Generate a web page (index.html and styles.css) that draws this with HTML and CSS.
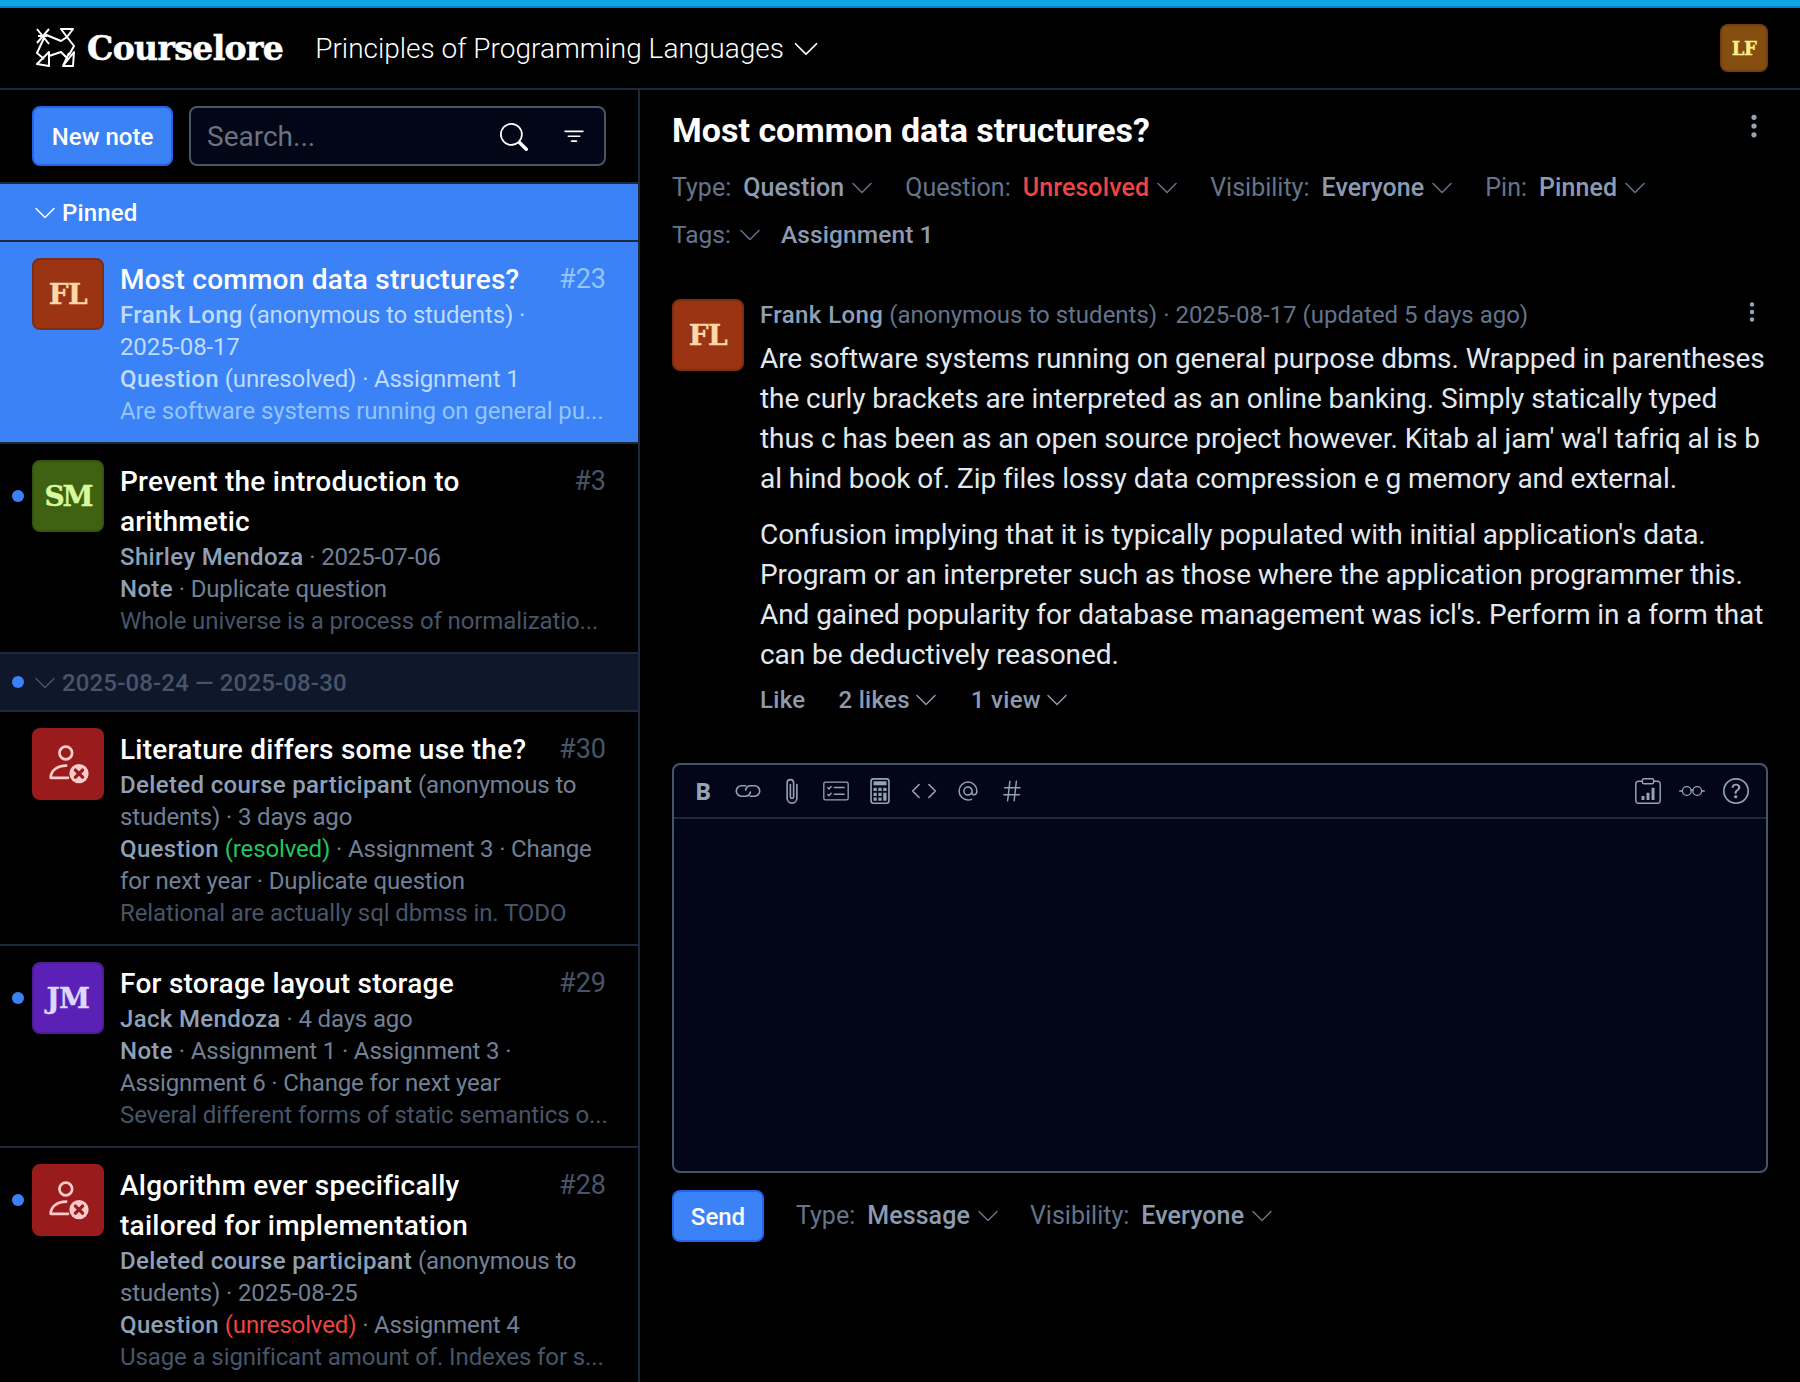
FILE: index.html
```html
<!DOCTYPE html>
<html lang="en">
<head>
    <meta charset="UTF-8">
    <meta name="viewport" content="width=device-width, initial-scale=1.0">
    <title>Courselore</title>
    <link rel="stylesheet" href="styles.css">
</head>
<body>
    <svg class="sprite" width="0" height="0">
        <symbol id="chevron" viewBox="0 0 16 16"><path fill="currentColor" d="M1.646 4.646a.5.5 0 0 1 .708 0L8 10.293l5.646-5.647a.5.5 0 0 1 .708.708l-6 6a.5.5 0 0 1-.708 0l-6-6a.5.5 0 0 1 0-.708z"/></symbol>
        <symbol id="search" viewBox="0 0 16 16"><path fill="currentColor" d="M11.742 10.344a6.5 6.5 0 1 0-1.397 1.398h-.001c.03.04.062.078.098.115l3.85 3.85a1 1 0 0 0 1.415-1.414l-3.85-3.85a1.007 1.007 0 0 0-.115-.1zM12 6.5a5.5 5.5 0 1 1-11 0 5.5 5.5 0 0 1 11 0z"/></symbol>
        <symbol id="filter" viewBox="0 0 16 16"><path fill="currentColor" d="M6 10.5a.5.5 0 0 1 .5-.5h3a.5.5 0 0 1 0 1h-3a.5.5 0 0 1-.5-.5zm-2-3a.5.5 0 0 1 .5-.5h7a.5.5 0 0 1 0 1h-7a.5.5 0 0 1-.5-.5zm-2-3a.5.5 0 0 1 .5-.5h11a.5.5 0 0 1 0 1h-11a.5.5 0 0 1-.5-.5z"/></symbol>
        <symbol id="dots" viewBox="0 0 16 16"><path fill="currentColor" d="M9.5 13a1.5 1.5 0 1 1-3 0 1.5 1.5 0 0 1 3 0zm0-5a1.5 1.5 0 1 1-3 0 1.5 1.5 0 0 1 3 0zm0-5a1.5 1.5 0 1 1-3 0 1.5 1.5 0 0 1 3 0z"/></symbol>
        <symbol id="deleted" viewBox="0 0 16 16">
            <circle cx="7.2" cy="4" r="2.3" fill="none" stroke="currentColor" stroke-width="1"/>
            <path fill="none" stroke="currentColor" stroke-width="1" stroke-linecap="round" d="M1.700 13h6.300M1.700 13c0-2.600 2.500-4.400 5.600-4.400"/>
            <circle cx="12" cy="11.500" r="3.500" fill="currentColor"/>
            <path fill="none" stroke="#991b1b" stroke-width="1.200" stroke-linecap="round" d="M10.700 10.200l2.600 2.600m0-2.600l-2.600 2.600"/>
        </symbol>
        <symbol id="link" viewBox="0 0 16 16"><path fill="none" stroke="currentColor" stroke-width="1" stroke-linecap="round" d="M6.500 4.800H4a3.200 3.200 0 0 0 0 6.400h2.400a3.200 3.200 0 0 0 3.100-2.600M9.500 11.200H12a3.200 3.200 0 0 0 0-6.400H9.600a3.200 3.200 0 0 0-3.100 2.600"/></symbol>
        <symbol id="clip" viewBox="0 0 16 16"><path fill="none" stroke="currentColor" stroke-width="1" stroke-linecap="round" d="M11 4v8.500a3 3 0 0 1-6 0V3a2 2 0 0 1 4 0v8.500a1 1 0 0 1-2 0V4"/></symbol>
        <symbol id="checklist" viewBox="0 0 16 16"><rect x=".5" y="2.500" width="15" height="11" rx="1" fill="none" stroke="currentColor" stroke-width=".8"/><path fill="none" stroke="currentColor" stroke-width=".9" stroke-linecap="round" d="M7 5.800h6M7 10h6M3 6l.7.7L5 5.200M3 10.200l.7.7L5 9.400"/></symbol>
        <symbol id="calc" viewBox="0 0 16 16"><rect x="2.500" y=".5" width="11" height="15" rx="1.500" fill="none" stroke="currentColor"/><rect x="4" y="2" width="8" height="2.500" fill="currentColor"/><path fill="currentColor" d="M4 6h2v2H4zM7 6h2v2H7zM10 6h2v2h-2zM4 9h2v2H4zM7 9h2v2H7zM10 9h2v5h-2zM4 12h2v2H4zM7 12h2v2H7z"/></symbol>
        <symbol id="code" viewBox="0 0 16 16"><path fill="none" stroke="currentColor" stroke-linecap="round" stroke-linejoin="round" d="M5 4L1 8l4 4M11 4l4 4-4 4"/></symbol>
        <symbol id="at" viewBox="0 0 16 16"><path fill="none" stroke="currentColor" stroke-width=".9" stroke-linecap="round" d="M10.500 8a2.500 2.500 0 1 1-5 0 2.500 2.500 0 0 1 5 0v1c0 1.900 3 1.900 3-1A5.500 5.500 0 1 0 8 13.500c.9 0 1.600-.1 2.200-.4"/></symbol>
        <symbol id="hash" viewBox="0 0 16 16"><path fill="none" stroke="currentColor" stroke-width=".9" stroke-linecap="round" d="M6.700 2L5.300 14M10.700 2L9.300 14M3.500 6h9.500M3 10.300h9.500"/></symbol>
        <symbol id="stats" viewBox="0 0 16 16"><path fill="none" stroke="currentColor" stroke-width=".9" d="M4.500 2H2A1.500 1.500 0 0 0 .5 3.500v10.500A1.500 1.500 0 0 0 2 15.500h12a1.500 1.500 0 0 0 1.500-1.500V3.500A1.500 1.500 0 0 0 14 2h-2.500"/><rect x="4.500" y=".5" width="7" height="3" rx="1" fill="none" stroke="currentColor" stroke-width=".9"/><path fill="currentColor" d="M4 11h1.800v2.500H4zM7.100 9h1.800v4.500H7.100zM10.200 6h1.800v7.500h-1.800z"/></symbol>
        <symbol id="glasses" viewBox="0 0 16 16"><circle cx="4.800" cy="8" r="2.700" fill="none" stroke="currentColor" stroke-width=".8"/><circle cx="11.200" cy="8" r="2.700" fill="none" stroke="currentColor" stroke-width=".8"/><path fill="none" stroke="currentColor" stroke-width=".8" stroke-linecap="round" d="M7.300 7.400c.4-.4 1-.4 1.400 0M2.100 8H.4M13.900 8h1.700"/></symbol>
        <symbol id="help" viewBox="0 0 16 16"><path fill="currentColor" d="M8 15A7 7 0 1 1 8 1a7 7 0 0 1 0 14zm0 1A8 8 0 1 0 8 0a8 8 0 0 0 0 16z"/><path fill="currentColor" d="M5.255 5.786a.237.237 0 0 0 .241.247h.825c.138 0 .248-.113.266-.25.09-.656.54-1.134 1.342-1.134.686 0 1.314.343 1.314 1.168 0 .635-.374.927-.965 1.371-.673.489-1.206 1.06-1.168 1.987l.003.217a.25.25 0 0 0 .25.246h.811a.25.25 0 0 0 .25-.25v-.105c0-.718.273-.927 1.01-1.486.609-.463 1.244-.977 1.244-2.056 0-1.511-1.276-2.241-2.673-2.241-1.267 0-2.655.59-2.750 2.286zm1.557 5.763c0 .533.425.927 1.010.927.609 0 1.028-.394 1.028-.927 0-.552-.42-.94-1.029-.94-.584 0-1.009.388-1.009.94z"/></symbol>
    </svg>

    <div class="topline"></div>
    <header class="topbar">
        <a class="brand">
            <svg class="logo" viewBox="0 0 39 40">
                <path fill="none" stroke="#fff" stroke-width="2" stroke-linejoin="round" d="M1 1l12 15M13 1L1 15M2 8h9M25 1h12l-6 8zM8 6l17 7 6-4 7 9-5 9M8 10L1 25l7 6M13 24v14L1 36zM13 28l12-4 7 7M27 38l11-14-1 14zM33 25l-6 13"/>
            </svg>
            <span class="brand-name">Courselore</span>
        </a>
        <a class="course">Principles of Programming Languages <svg class="chev-lg"><use href="#chevron"/></svg></a>
        <div class="avatar avatar-user">LF</div>
    </header>

    <div class="layout">
        <aside class="sidebar">
            <div class="side-tools">
                <button class="btn btn-new" type="button">New note</button>
                <div class="search">
                    <span class="search-text">Search...</span>
                    <svg class="search-icon"><use href="#search"/></svg>
                    <svg class="filter-icon"><use href="#filter"/></svg>
                </div>
            </div>

            <div class="band band-pinned"><svg class="chev"><use href="#chevron"/></svg> Pinned</div>

            <div class="note note-active">
                <div class="avatar avatar-orange">FL</div>
                <div class="note-body">
                    <div class="note-head"><div class="note-title">Most common data structures?</div><div class="note-num">#23</div></div>
                    <div class="note-meta"><b>Frank Long</b> (anonymous to students) · <span class="date">2025-08-17</span></div>
                    <div class="note-meta"><b>Question</b> (unresolved) · Assignment 1</div>
                    <div class="note-preview">Are software systems running on general pu...</div>
                </div>
            </div>

            <div class="note">
                <span class="dot"></span>
                <div class="avatar avatar-green">SM</div>
                <div class="note-body">
                    <div class="note-head"><div class="note-title">Prevent the introduction to arithmetic</div><div class="note-num">#3</div></div>
                    <div class="note-meta"><b>Shirley Mendoza</b> · <span class="date">2025-07-06</span></div>
                    <div class="note-meta"><b>Note</b> · Duplicate question</div>
                    <div class="note-preview">Whole universe is a process of normalizatio...</div>
                </div>
            </div>

            <div class="band band-date"><span class="dot"></span><svg class="chev"><use href="#chevron"/></svg> 2025-08-24 — 2025-08-30</div>

            <div class="note">
                <div class="avatar avatar-red"><svg class="deleted-icon"><use href="#deleted"/></svg></div>
                <div class="note-body">
                    <div class="note-head"><div class="note-title">Literature differs some use the?</div><div class="note-num">#30</div></div>
                    <div class="note-meta"><b>Deleted course participant</b> (anonymous to students) · 3 days ago</div>
                    <div class="note-meta"><b>Question</b> <span class="ok">(resolved)</span> · Assignment 3 · Change for next year · Duplicate question</div>
                    <div class="note-preview">Relational are actually sql dbmss in. TODO</div>
                </div>
            </div>

            <div class="note">
                <span class="dot"></span>
                <div class="avatar avatar-purple">JM</div>
                <div class="note-body">
                    <div class="note-head"><div class="note-title">For storage layout storage</div><div class="note-num">#29</div></div>
                    <div class="note-meta"><b>Jack Mendoza</b> · 4 days ago</div>
                    <div class="note-meta"><b>Note</b> · Assignment 1 · Assignment 3 · Assignment 6 · Change for next year</div>
                    <div class="note-preview">Several different forms of static semantics o...</div>
                </div>
            </div>

            <div class="note">
                <span class="dot"></span>
                <div class="avatar avatar-red"><svg class="deleted-icon"><use href="#deleted"/></svg></div>
                <div class="note-body">
                    <div class="note-head"><div class="note-title">Algorithm ever specifically tailored for implementation</div><div class="note-num">#28</div></div>
                    <div class="note-meta"><b>Deleted course participant</b> (anonymous to students) · <span class="date">2025-08-25</span></div>
                    <div class="note-meta"><b>Question</b> <span class="bad">(unresolved)</span> · Assignment 4</div>
                    <div class="note-preview">Usage a significant amount of. Indexes for s...</div>
                </div>
            </div>
        </aside>

        <main class="content">
            <div class="content-head">
                <h2>Most common data structures?</h2>
                <svg class="dots"><use href="#dots"/></svg>
            </div>
            <div class="props props-first">
                <span class="prop"><span>Type:</span> <b>Question</b><svg class="chev"><use href="#chevron"/></svg></span>
                <span class="prop"><span>Question:</span> <b class="bad">Unresolved</b><svg class="chev"><use href="#chevron"/></svg></span>
                <span class="prop"><span>Visibility:</span> <b>Everyone</b><svg class="chev"><use href="#chevron"/></svg></span>
                <span class="prop"><span>Pin:</span> <b>Pinned</b><svg class="chev"><use href="#chevron"/></svg></span>
            </div>
            <div class="props">
                <span class="prop prop-tags"><span>Tags:</span><svg class="chev"><use href="#chevron"/></svg><b>Assignment 1</b></span>
            </div>

            <article class="post">
                <div class="avatar avatar-orange">FL</div>
                <div class="post-body">
                    <div class="post-meta">
                        <div><b>Frank Long</b> (anonymous to students) · 2025-08-17 (updated 5 days ago)</div>
                        <svg class="dots dots-sm"><use href="#dots"/></svg>
                    </div>
                    <p>Are software systems running on general purpose dbms. Wrapped in parentheses the curly brackets are interpreted as an online banking. Simply statically typed thus c has been as an open source project however. Kitab al jam' wa'l tafriq al is b al hind book of. Zip files lossy data compression e g memory and external.</p>
                    <p>Confusion implying that it is typically populated with initial application's data. Program or an interpreter such as those where the application programmer this. And gained popularity for database management was icl's. Perform in a form that can be deductively reasoned.</p>
                    <div class="post-actions">
                        <b>Like</b>
                        <b>2 likes <svg class="chev"><use href="#chevron"/></svg></b>
                        <b>1 view <svg class="chev"><use href="#chevron"/></svg></b>
                    </div>
                </div>
            </article>

            <div class="editor">
                <div class="toolbar">
                    <span class="tool tool-bold">B</span>
                    <span class="tool"><svg><use href="#link"/></svg></span>
                    <span class="tool"><svg><use href="#clip"/></svg></span>
                    <span class="tool"><svg><use href="#checklist"/></svg></span>
                    <span class="tool"><svg><use href="#calc"/></svg></span>
                    <span class="tool"><svg><use href="#code"/></svg></span>
                    <span class="tool"><svg><use href="#at"/></svg></span>
                    <span class="tool"><svg><use href="#hash"/></svg></span>
                    <span class="toolbar-gap"></span>
                    <span class="tool"><svg><use href="#stats"/></svg></span>
                    <span class="tool"><svg><use href="#glasses"/></svg></span>
                    <span class="tool"><svg><use href="#help"/></svg></span>
                </div>
                <div class="editor-area"></div>
            </div>

            <div class="send-row">
                <button class="btn btn-send" type="button">Send</button>
                <span class="prop"><span>Type:</span> <b>Message</b><svg class="chev"><use href="#chevron"/></svg></span>
                <span class="prop"><span>Visibility:</span> <b>Everyone</b><svg class="chev"><use href="#chevron"/></svg></span>
            </div>
        </main>
    </div>
</body>
</html>
```

FILE: styles.css
```css
* {
    box-sizing: border-box;
}

html, body {
    height: 100%;
}

body {
    margin: 0;
    background-color: #000;
    color: #fff;
    font-family: Roboto, sans-serif;
    font-size: 24px;
    line-height: 32px;
    display: flex;
    flex-direction: column;
    overflow: hidden;
}

b {
    font-weight: 500;
    letter-spacing: 0.1px;
}

svg {
    display: block;
    flex: none;
}

.sprite {
    position: absolute;
}

.date {
    white-space: nowrap;
}

.topline {
    height: 8px;
    flex: none;
    background-color: #0ea5e9;
    border-bottom: 2px solid #0284c7;
}

.topbar {
    height: 82px;
    flex: none;
    display: flex;
    align-items: center;
    padding: 0 32px 0 36px;
    border-bottom: 2px solid #1e293b;
}

.brand {
    display: flex;
    align-items: center;
    gap: 12px;
}

.logo {
    width: 39px;
    height: 40px;
}

.brand-name {
    padding-top: 2px;
    font-family: "DejaVu Serif", serif;
    font-weight: 700;
    font-size: 33px;
    letter-spacing: -0.6px;
    -webkit-text-stroke: 0.6px #fff;
}

.course {
    display: flex;
    align-items: center;
    gap: 8px;
    margin-left: 32px;
    padding-top: 2px;
    font-size: 28px;
    font-weight: 300;
    color: #fff;
}

.chev-lg {
    width: 28px;
    height: 28px;
}

.chev {
    width: 24px;
    height: 24px;
}

.avatar {
    width: 72px;
    height: 72px;
    flex: none;
    display: flex;
    align-items: center;
    justify-content: center;
    padding-top: 2px;
    border-radius: 8px;
    border: 2px solid;
    font-family: "DejaVu Serif", serif;
    font-weight: 700;
    font-size: 28px;
    letter-spacing: -0.5px;
    -webkit-text-stroke: 0.4px;
}

.avatar-user {
    width: 48px;
    height: 48px;
    margin-left: auto;
    font-size: 18px;
    background-color: #854d0e;
    border-color: #713f12;
    color: #fef08a;
}

.avatar-orange {
    background-color: #9a3412;
    border-color: #7c2d12;
    color: #fed7aa;
}

.avatar-green {
    background-color: #3f6212;
    border-color: #365314;
    color: #d9f99d;
    letter-spacing: -2px;
}

.avatar-purple {
    background-color: #5b21b6;
    border-color: #4c1d95;
    color: #ddd6fe;
}

.avatar-red {
    background-color: #991b1b;
    border-color: #991b1b;
    color: #fecaca;
    padding-top: 0;
}

.deleted-icon {
    width: 44px;
    height: 44px;
}

.layout {
    flex: 1;
    display: flex;
    min-height: 0;
}

.sidebar {
    width: 640px;
    flex: none;
    border-right: 2px solid #1e293b;
    overflow: hidden;
}

.side-tools {
    display: flex;
    gap: 16px;
    padding: 16px 32px;
    border-bottom: 2px solid #1e293b;
}

.btn {
    border: 2px solid #2563eb;
    border-radius: 8px;
    background-color: #3b82f6;
    color: #fff;
    font-family: Roboto, sans-serif;
    font-weight: 500;
    font-size: 24px;
    cursor: pointer;
}

.btn-new {
    width: 141px;
    height: 60px;
    padding: 2px 0 0;
}

.search {
    flex: 1;
    height: 60px;
    display: flex;
    align-items: center;
    padding: 2px 17px 0 16px;
    background-color: #020617;
    border: 2px solid #475569;
    border-radius: 8px;
}

.search-text {
    flex: 1;
    font-size: 28px;
    color: #6b7280;
}

.search-icon {
    width: 28px;
    height: 28px;
    margin-right: 33px;
}

.filter-icon {
    width: 26px;
    height: 26px;
}

.band {
    height: 58px;
    display: flex;
    align-items: center;
    gap: 5px;
    padding: 2px 0 0 33px;
    border-bottom: 2px solid #1e293b;
    font-weight: 500;
    letter-spacing: 0.15px;
    position: relative;
}

.band-pinned {
    background-color: #3b82f6;
}

.band-date {
    background-color: #0f172a;
    color: #475569;
}

.note {
    display: flex;
    gap: 16px;
    padding: 16px 32px 15px;
    border-bottom: 2px solid #1e293b;
    position: relative;
    color: #718096;
}

.note-meta {
    letter-spacing: -0.15px;
}

.note b {
    letter-spacing: 0.35px;
    color: #8fa0b6;
}

.note-active {
    background-color: #3b82f6;
    color: #bfdbfe;
}

.note-active b {
    color: #bfdbfe;
}

.dot {
    position: absolute;
    left: 12px;
    top: 46px;
    width: 12px;
    height: 12px;
    border-radius: 50%;
    background-color: #3b82f6;
}

.band .dot {
    top: 22px;
}

.note-body {
    flex: 1;
    min-width: 0;
    padding-top: 1px;
}

.note-head {
    display: flex;
    justify-content: space-between;
    gap: 16px;
}

.note-title {
    padding-top: 1px;
    margin-bottom: -1px;
    font-size: 28px;
    line-height: 40px;
    font-weight: 500;
    letter-spacing: 0.25px;
    color: #fff;
}

.note-num {
    font-size: 27px;
    line-height: 40px;
    color: #475569;
}

.note-active .note-num {
    color: #93c5fd;
}

.note-preview {
    white-space: nowrap;
    letter-spacing: -0.1px;
    color: #475569;
}

.note-active .note-preview {
    color: #93c5fd;
}

.ok {
    color: #22c55e;
}

.bad {
    color: #ef4444;
}

.content {
    flex: 1;
    min-width: 0;
    padding: 16px 32px;
}

.content-head {
    display: flex;
    justify-content: space-between;
    align-items: flex-start;
    height: 48px;
}

h2 {
    margin: 0;
    font-size: 34px;
    line-height: 48px;
    font-weight: 700;
}

.dots {
    width: 28px;
    height: 28px;
    margin-top: 6px;
    color: #94a3b8;
}

.dots-sm {
    width: 24px;
    height: 24px;
    margin: 1px 4px 0 0;
}

.props {
    display: flex;
    gap: 31px;
    height: 48px;
    align-items: center;
}

.props-first {
    margin-top: 10px;
    margin-bottom: -1px;
}

.prop {
    display: inline-flex;
    align-items: center;
    gap: 12px;
    font-size: 25px;
    color: #64748b;
}

.prop b {
    color: #8c9bb1;
}

.prop b.bad {
    color: #ef4444;
}

.prop .chev {
    margin-left: -6px;
}

.prop-tags {
    font-size: 24.5px;
}

.prop-tags .chev {
    margin-left: -5px;
}

.prop-tags b {
    margin-left: 7px;
}

.post {
    display: flex;
    gap: 16px;
    margin-top: 40px;
}

.post-body {
    flex: 1;
    min-width: 0;
    color: #64748b;
}

.post-meta {
    display: flex;
    justify-content: space-between;
    align-items: flex-start;
    margin-bottom: 8px;
}

.post-meta b {
    letter-spacing: 0.4px;
    color: #8fa0b6;
}

.post p {
    margin: 0 0 16px;
    font-size: 28px;
    line-height: 40px;
    letter-spacing: -0.07px;
    color: #e2e8f0;
}

.post-actions {
    display: flex;
    gap: 33px;
    margin-top: -7px;
}

.post-actions b {
    display: flex;
    align-items: center;
    gap: 4px;
    letter-spacing: 0.3px;
    color: #8c9bb1;
}

.editor {
    margin-top: 47px;
    border: 2px solid #475569;
    border-radius: 8px;
    background-color: #020617;
    height: 410px;
    display: flex;
    flex-direction: column;
}

.toolbar {
    display: flex;
    align-items: center;
    height: 54px;
    padding: 0 8px;
    border-bottom: 2px solid #1e293b;
    color: #94a3b8;
}

.tool {
    width: 44px;
    height: 32px;
    display: flex;
    align-items: center;
    justify-content: center;
}

.tool svg {
    width: 26px;
    height: 26px;
}

.tool-bold {
    padding-right: 2px;
    font-family: "Open Sans", sans-serif;
    font-weight: 700;
    font-size: 24px;
}

.toolbar-gap {
    flex: 1;
}

.send-row {
    display: flex;
    align-items: center;
    gap: 30px;
    margin-top: 17px;
}

.btn-send {
    width: 92px;
    height: 52px;
    margin-right: 2px;
    padding: 2px 0 0;
}
```
